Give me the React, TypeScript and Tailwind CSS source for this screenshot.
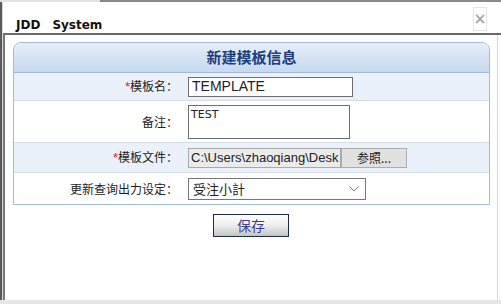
import React from "react";

const cjk = { fontFamily: '"Noto Sans CJK SC", "Liberation Sans", sans-serif' };

function Label({ req, children }: { req?: boolean; children: React.ReactNode }) {
  return (
    <div className="w-[164px] shrink-0 text-right pr-[0px] text-[12px] text-[#222] leading-none" style={cjk}>
      {req && <span className="text-[#e02020] text-[13px]" style={{ fontFamily: '"Liberation Sans", sans-serif' }}>*</span>}
      {children}
    </div>
  );
}

export default function App() {
  return (
    <div className="w-[501px] h-[304px] bg-white flex flex-col overflow-hidden">
      <div className="h-[2px] flex shrink-0">
        <div className="w-[100px] bg-[#e2e2e2]" />
        <div className="flex-1 bg-[#8a8a8a]" />
      </div>
      <div className="flex-1 flex min-h-0">
        <div className="w-[2px] bg-[#5a5a5a] shrink-0" />
        <div className="w-[1px] bg-[#d8d8d8] shrink-0" />
        <div className="flex-1 flex flex-col min-w-0">
          <div className="h-[31px] shrink-0 flex items-start justify-between">
            <div
              className="pl-[13px] pt-[17px] text-[12px] font-bold text-[#111] leading-none"
              style={{ fontFamily: '"DejaVu Sans", sans-serif' }}
            >
              JDD<span className="ml-[12px]">System</span>
            </div>
            <div className="mt-[5px] mr-[14px] w-[14px] h-[24px] border border-[#e4e4e4] flex items-center justify-center text-[#a8a8a8] text-[15px] font-bold leading-none" style={{ fontFamily: '"DejaVu Sans", sans-serif' }}>
              ×
            </div>
          </div>
          <div className="flex-1 flex border-t-2 border-[#6a6a6a] min-h-0">
            <div className="w-[2px] bg-[#777] shrink-0" />
            <div className="flex-1 flex flex-col">
              <div className="mt-[7px] ml-[8px] mr-[7px] border border-[#a2b9da] rounded-t-[8px] bg-white">
                <div
                  className="h-[30px] rounded-t-[8px] border-b border-[#a2b9da] bg-gradient-to-b from-[#e6eef9] to-[#c8d9f0] flex items-center justify-center text-[15px] font-bold text-[#1c407e]"
                  style={cjk}
                >
                  新建模板信息
                </div>
                <div className="h-[28px] bg-[#ebf1fb] border-b border-[#d6dce6] flex items-center">
                  <Label req>模板名：</Label>
                  <div className="ml-[10px] w-[165px] h-[20px] border border-[#6f6f6f] bg-white flex items-center pl-[3px] text-[14px] text-[#222]" style={{ fontFamily: '"Liberation Sans", sans-serif' }}>
                    TEMPLATE
                  </div>
                </div>
                <div className="h-[42px] bg-white border-b border-[#d6dce6] flex items-center">
                  <Label>备注：</Label>
                  <div className="ml-[10px] w-[162px] h-[34px] border border-[#6f6f6f] bg-white pl-[2px] pt-[2px] text-[11px] leading-[13px] text-[#222]" style={{ fontFamily: '"DejaVu Sans", sans-serif' }}>
                    TEST
                  </div>
                </div>
                <div className="h-[30px] bg-[#ebf1fb] border-b border-[#d6dce6] flex items-center">
                  <Label req>模板文件：</Label>
                  <div className="ml-[10px] w-[153px] h-[20px] border border-[#a9a9a9] bg-[#ebebeb] flex items-center pl-[2px] text-[13px] text-[#222] overflow-hidden whitespace-nowrap" style={{ fontFamily: '"Liberation Sans", sans-serif' }}>
                    C:\Users\zhaoqiang\Desk
                  </div>
                  <div className="w-[66px] h-[20px] border border-[#adadad] bg-[#e1e1e1] flex items-center justify-center text-[12px] text-[#222]" style={cjk}>
                    参照...
                  </div>
                </div>
                <div className="h-[31px] bg-white flex items-center">
                  <Label>更新查询出力设定：</Label>
                  <div className="ml-[10px] w-[178px] h-[22px] border border-[#777] bg-white flex items-center justify-between pl-[4px] pr-[6px] text-[13px] text-[#222]" style={cjk}>
                    <span>受注小計</span>
                    <svg width="10" height="6" viewBox="0 0 10 6" fill="none">
                      <path d="M0.5 0.5L5 5L9.5 0.5" stroke="#777" strokeWidth="1" />
                    </svg>
                  </div>
                </div>
              </div>
              <div className="flex justify-center mt-[9px]">
                <div
                  className="w-[76px] h-[23px] border border-[#1b2a47] bg-gradient-to-b from-[#ffffff] via-[#eeeeee] to-[#c4c4c4] flex items-center justify-center text-[14px] text-[#3f3f86]"
                  style={cjk}
                >
                  保存
                </div>
              </div>
            </div>
            <div className="w-[1px] bg-[#d9d9d9] shrink-0" />
            <div className="w-[3px] bg-white shrink-0" />
          </div>
        </div>
      </div>
      <div className="h-[4px] bg-[#e6e6e6] shrink-0" />
    </div>
  );
}
